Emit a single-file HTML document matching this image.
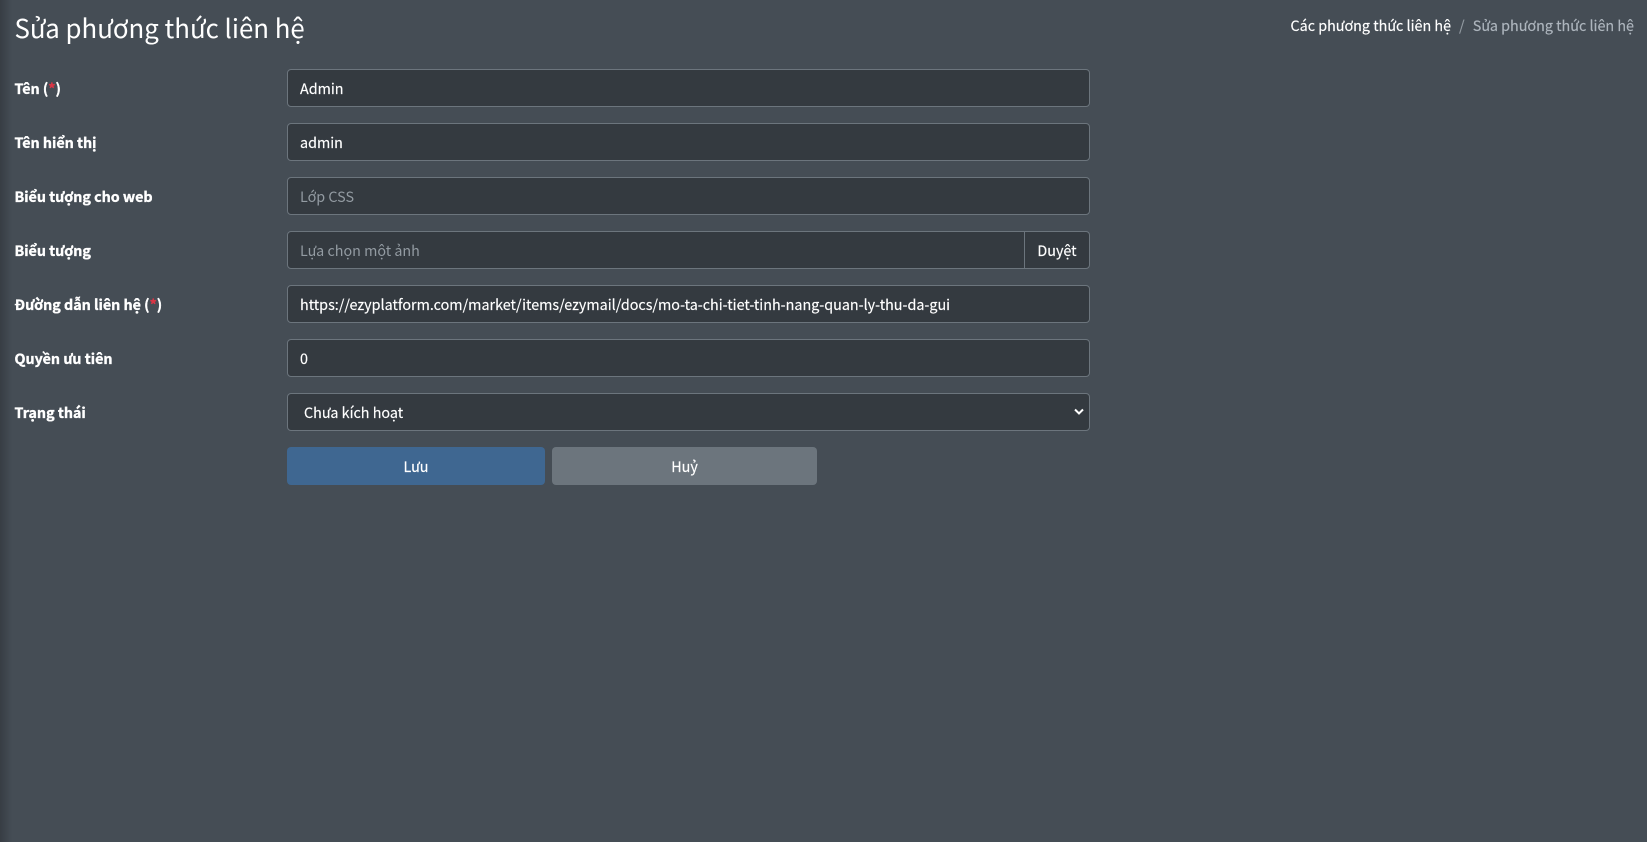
<!DOCTYPE html>
<html lang="vi">
<head>
<meta charset="utf-8">
<title>Sửa phương thức liên hệ</title>
<style>
html,body{margin:0;padding:0;width:1647px;height:842px;overflow:hidden;background:#454d55;}
body{position:relative;color:#fff;font-family:"Noto Sans CJK JP","Noto Sans CJK SC","Liberation Sans",sans-serif;font-size:14.33px;-webkit-text-stroke:.15px currentColor;}
.shadow{position:absolute;left:0;top:0;width:12px;height:842px;background:linear-gradient(to right,#373d44,#454d55);}
.abs{position:absolute;white-space:nowrap;}
h1{position:absolute;left:14.5px;top:7px;margin:0;font-size:25.8px;font-weight:400;line-height:42px;white-space:nowrap;-webkit-text-stroke:0;}
.bc{top:14px;height:24px;line-height:24px;}
.lb{position:absolute;left:14.5px;height:38px;line-height:40px;font-weight:700;font-size:14.27px;white-space:nowrap;-webkit-text-stroke:.35px currentColor;}
.lb i{font-style:normal;color:#dc3545;}
.in{position:absolute;left:287px;width:803px;height:38px;box-sizing:border-box;background:#343a40;border:1px solid #6c757d;border-radius:4px;line-height:38px;padding-left:12px;white-space:nowrap;}
.ph{color:#939ba2;-webkit-text-stroke:0;}
.btn{position:absolute;top:447px;height:38px;line-height:40px;text-align:center;border-radius:4px;}
</style>
</head>
<body>
<div class="shadow"></div>
<h1>Sửa phương thức liên hệ</h1>
<div class="abs bc" style="left:1290.5px;">Các phương thức liên hệ</div>
<div class="abs bc" style="left:1459px;color:#939ba2;">/</div>
<div class="abs bc" style="right:13px;color:#adb5bd;">Sửa phương thức liên hệ</div>

<div class="lb" style="top:69px;">Tên (<i>*</i>)</div>
<div class="in" style="top:69px;">Admin</div>

<div class="lb" style="top:123px;">Tên hiển thị</div>
<div class="in" style="top:123px;">admin</div>

<div class="lb" style="top:177px;">Biểu tượng cho web</div>
<div class="in ph" style="top:177px;">Lớp CSS</div>

<div class="lb" style="top:231px;">Biểu tượng</div>
<div class="in ph" style="top:231px;">Lựa chọn một ảnh</div>
<div class="abs" style="left:1024px;top:232px;width:1px;height:36px;background:#6c757d;"></div>
<div class="abs" style="left:1025px;top:231px;width:64px;height:38px;line-height:40px;text-align:center;">Duyệt</div>

<div class="lb" style="top:285px;">Đường dẫn liên hệ (<i>*</i>)</div>
<div class="in" style="top:285px;">https://ezyplatform.com/market/items/ezymail/docs/mo-ta-chi-tiet-tinh-nang-quan-ly-thu-da-gui</div>

<div class="lb" style="top:339px;">Quyền ưu tiên</div>
<div class="in" style="top:339px;">0</div>

<div class="lb" style="top:393px;">Trạng thái</div>
<div class="in" style="top:393px;padding-left:16px;">Chưa kích hoạt</div>
<svg class="abs" style="left:1074px;top:408px;" width="10" height="8" viewBox="0 0 10 8"><path d="M1 1.5 L5 5.5 L9 1.5" fill="none" stroke="#fff" stroke-width="2"/></svg>

<div class="btn" style="left:287px;width:258px;background:#3f6791;">Lưu</div>
<div class="btn" style="left:552px;width:265px;background:#6c757d;">Huỷ</div>
</body>
</html>
